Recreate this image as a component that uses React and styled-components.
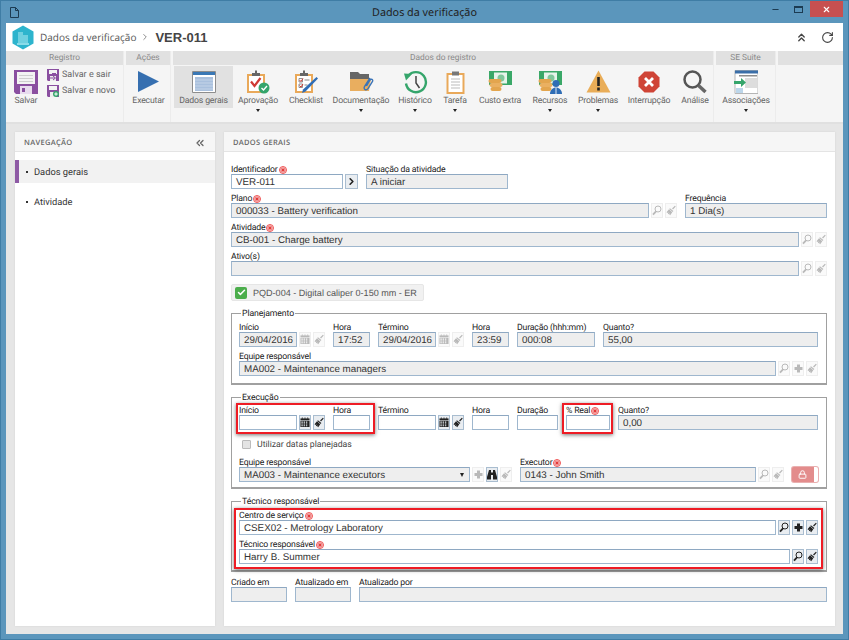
import styled, { createGlobalStyle } from "styled-components";
import { ChevronsUp, ChevronsLeft, RotateCw, ChevronRight, Check, Lock, Minus, X } from "lucide-react";

const GlobalStyle = createGlobalStyle`
  html, body { margin: 0; padding: 0; background: #5b96bc; overflow: hidden; }
  * { box-sizing: border-box; }
  body {
    font-family: Roboto, "Liberation Sans", sans-serif;
    color: #333;
    text-rendering: geometricPrecision;
  }
`;

const Page = styled.div`
  width: 849px;
  height: 640px;
  display: flex;
  flex-direction: column;
  background: #5b96bc;
  border: 1px solid #3f7da5;
`;
const TitleBar = styled.div`
  height: 22px;
  flex: none;
  position: relative;
  display: flex;
  align-items: center;
  justify-content: center;
  font-family: "Noto Sans", sans-serif;
  font-size: 10.8px;
  color: #222;
`;
const DocIcon = styled.svg`
  position: absolute;
  left: 9px;
  top: 6px;
`;
const WinControls = styled.div`
  position: absolute;
  right: 5px;
  top: 0;
  display: flex;
  align-items: flex-start;
`;
const WinBtn = styled.div`
  width: ${(p) => p.$w}px;
  height: 16px;
  display: flex;
  align-items: center;
  justify-content: center;
  background: ${(p) => (p.$close ? "#c75050" : "transparent")};
  color: ${(p) => (p.$close ? "#fff" : "#1c3b52")};
`;
const MaxBox = styled.div`
  width: 9px;
  height: 7px;
  border: 1px solid #1c3b52;
  border-top-width: 2px;
`;
const Frame = styled.div`
  flex: 1;
  margin: 0 5px 5px;
  display: flex;
  flex-direction: column;
  background: #e6e6e6;
  min-height: 0;
`;
const Header = styled.div`
  height: 28px;
  flex: none;
  background: #fff;
  display: flex;
  align-items: center;
  padding: 0 9px 0 6px;
`;
const Crumb = styled.span`
  font-family: "Open Sans", sans-serif;
  font-size: 10px;
  color: #555;
  margin-left: 6px;
`;
const CrumbSep = styled.span`
  display: flex;
  color: #777;
  margin: 0 5px 0 4px;
`;
const CrumbTitle = styled.span`
  font-family: "Liberation Sans", sans-serif;
  font-size: 13px;
  font-weight: 700;
  color: #444;
`;
const HeaderTools = styled.div`
  margin-left: auto;
  display: flex;
  gap: 13px;
  align-items: center;
  color: #444;
`;
const Ribbon = styled.div`
  height: 73px;
  flex: none;
  display: flex;
  background: #f5f5f5;
  border-bottom: 2px solid #e0e0e0;
`;
const Group = styled.div`
  width: ${(p) => p.$w}px;
  flex: ${(p) => (p.$w ? "none" : "1")};
  display: flex;
  flex-direction: column;
  margin-right: ${(p) => (p.$last ? 0 : 2)}px;
  border-right: ${(p) => (p.$last ? "none" : "1px solid #ececec")};
`;
const GroupTitle = styled.div`
  height: 14px;
  background: #e1e1e1;
  font-size: 8.4px;
  line-height: 15px;
  text-align: center;
  color: #8a8a8a;
  flex: none;
`;
const GroupBody = styled.div`
  display: flex;
  flex: 1;
  padding: 1px 0 0 1px;
`;
const Tool = styled.div`
  width: ${(p) => p.$w}px;
  height: ${(p) => (p.$active ? "42px" : "auto")};
  flex: none;
  display: flex;
  flex-direction: column;
  align-items: center;
  background: ${(p) => (p.$active ? "#e1e1e1" : "transparent")};
  padding-top: 3px;
`;
const ToolIcon = styled.div`
  height: 25px;
  width: 100%;
  display: flex;
  align-items: center;
  justify-content: center;
`;
const ToolLabel = styled.div`
  font-size: 8.7px;
  letter-spacing: -0.17px;
  line-height: 12px;
  margin-top: 1px;
  color: #666;
  white-space: nowrap;
`;
const Caret = styled.div`
  width: 0;
  height: 0;
  margin-top: 2px;
  border-left: 2.5px solid transparent;
  border-right: 2.5px solid transparent;
  border-top: 3px solid #222;
`;
const SaveStack = styled.div`
  display: flex;
  flex-direction: column;
  gap: 3px;
  padding: 2px 0 0 2px;
`;
const SaveLine = styled.div`
  display: flex;
  align-items: center;
  gap: 3px;
  font-size: 9px;
  color: #666;
  height: 13px;
`;
const Workspace = styled.div`
  flex: 1;
  display: flex;
  gap: 9px;
  padding: 8px 8px 8px 9px;
  min-height: 0;
`;
const Panel = styled.div`
  width: ${(p) => p.$w}px;
  flex: none;
  background: #fff;
  display: flex;
  flex-direction: column;
  box-shadow: 0 0 2px rgba(0, 0, 0, 0.08);
`;
const PanelHead = styled.div`
  height: 20px;
  flex: none;
  background: #f6f6f6;
  border-bottom: 1px solid #e4e4e4;
  display: flex;
  align-items: center;
  justify-content: space-between;
  padding: 2px 9px 0;
  font-family: "Open Sans", sans-serif;
  font-size: 7.5px;
  font-weight: 600;
  letter-spacing: 0.3px;
  color: #666;
`;
const NavList = styled.div`
  padding-top: 8px;
  display: flex;
  flex-direction: column;
  gap: 7px;
`;
const NavItem = styled.div`
  height: 23px;
  display: flex;
  align-items: center;
  gap: 6px;
  padding-left: ${(p) => (p.$active ? "7px" : "11px")};
  padding-top: 1px;
  font-size: 9.3px;
  color: #333;
  background: ${(p) => (p.$active ? "#f2f2f2" : "transparent")};
  border-left: ${(p) => (p.$active ? "4px solid #8e5aa5" : "none")};
`;
const Dot = styled.span`
  width: 2px;
  height: 2px;
  background: #333;
`;
const Form = styled.div`
  padding: 10px 8px 0 7px;
  display: flex;
  flex-direction: column;
`;
const Row = styled.div`
  display: flex;
  gap: 8px;
  margin-bottom: ${(p) => p.$mb ?? 2}px;
  align-items: flex-end;
`;
const FieldBox = styled.div`
  display: flex;
  flex-direction: column;
  width: ${(p) => (p.$w ? `${p.$w}px` : "auto")};
  flex: ${(p) => (p.$w ? "none" : "1")};
  min-width: 0;
`;
const LabelLine = styled.div`
  height: 12px;
  padding-top: 3px;
  display: flex;
  align-items: center;
  gap: 1px;
  font-size: 8.7px;
  letter-spacing: -0.17px;
  color: #222;
  white-space: nowrap;
`;
const InputRow = styled.div`
  display: flex;
  gap: 2px;
  height: 15px;
`;
const Input = styled.div`
  flex: 1;
  min-width: 0;
  height: 15px;
  border: 1px solid #9fb7ce;
  border-top-color: #8ea8c2;
  background: ${(p) => (p.$off ? "#eeeeee" : "#fff")};
  font-family: "Liberation Sans", sans-serif;
  font-size: 9.8px;
  line-height: 15px;
  padding-left: 4px;
  color: #333;
  white-space: nowrap;
  overflow: hidden;
  display: flex;
  justify-content: space-between;
`;
const IconButton = styled.div`
  width: ${(p) => p.$w ?? 12}px;
  height: 15px;
  flex: none;
  display: flex;
  align-items: center;
  justify-content: center;
  background: ${(p) => (p.$off ? "#fafafa" : "#e9edf1")};
  border: 1px solid ${(p) => (p.$off ? "#eeeeee" : "#a9bdd0")};
  color: ${(p) => (p.$off ? "#b9b9b9" : "#222")};
`;
const Chip = styled.div`
  width: 193px;
  height: 17px;
  margin: 8px 0 6px;
  background: #f1f1f1;
  border: 1px solid #e6e6e6;
  border-radius: 2px;
  display: flex;
  align-items: center;
  gap: 6px;
  padding-left: 3px;
  font-family: "Liberation Sans", sans-serif;
  font-size: 9.05px;
  white-space: nowrap;
  color: #555;
`;
const CheckTile = styled.div`
  width: 12px;
  height: 12px;
  flex: none;
  border-radius: 2px;
  background: #4cae4c;
  color: #fff;
  display: flex;
  align-items: center;
  justify-content: center;
`;
const Fieldset = styled.fieldset`
  margin: 0 0 ${(p) => p.$mb ?? 6}px;
  padding: ${(p) => p.$pt ?? 1}px 8px ${(p) => p.$pb ?? 7}px 7px;
  border: 1px solid #a0a0a0;
  border-bottom-width: 2px;
  min-width: 0;
`;
const Legend = styled.legend`
  margin-left: 2px;
  padding: 0 1px;
  height: 12px;
  line-height: 14px;
  font-size: 8.7px;
  letter-spacing: -0.1px;
  color: #222;
`;
const Highlight = styled.div`
  position: relative;
  display: flex;
  flex-direction: ${(p) => (p.$column ? "column" : "row")};
  gap: ${(p) => (p.$column ? 2 : 8)}px;
  flex: ${(p) => (p.$column ? "1" : "none")};
  &::after {
    content: "";
    position: absolute;
    top: ${(p) => p.$t ?? 0}px;
    right: ${(p) => p.$r}px;
    bottom: ${(p) => p.$b ?? -4}px;
    left: ${(p) => p.$l}px;
    border: 2px solid #ee1c25;
    box-shadow: 0 1px 4px rgba(0, 0, 0, 0.55);
    pointer-events: none;
  }
`;
const CheckLine = styled.div`
  display: flex;
  align-items: center;
  gap: 6px;
  height: 13px;
  margin: 8px 0 4px 3px;
  font-size: 8.7px;
  color: #444;
`;
const FakeCheck = styled.div`
  width: 9px;
  height: 9px;
  background: #e4e4e4;
  border: 1px solid #bbb;
  border-radius: 1px;
`;
const SelectCaret = styled.div`
  width: 0;
  height: 0;
  align-self: center;
  margin-right: 5px;
  border-left: 2.5px solid transparent;
  border-right: 2.5px solid transparent;
  border-top: 4px solid #222;
`;
const LockButton = styled.div`
  width: 26px;
  height: 15px;
  flex: none;
  background: #e38c8c;
  border-radius: 2px;
  color: #fff;
  display: flex;
  align-items: center;
  padding-left: 6px;
  border-right: 4px solid #fff;
  box-shadow: 0 0 0 1px #e9b0b0;
`;

const Required = () => (
  <svg width="8" height="8" viewBox="0 0 8 8">
    <circle cx="4" cy="4" r="3.5" fill="#fbd4d4" stroke="#ec4545" strokeWidth="0.9" />
    <path d="M4 1.500v5M1.500 4h5M2.400 2.400l3.200 3.200M5.600 2.400L2.400 5.600" stroke="#e12f2f" strokeWidth="0.8" />
  </svg>
);
const SearchGlyph = () => (
  <svg width="10" height="11" viewBox="0 0 10 11" fill="none" stroke="currentColor">
    <circle cx="6" cy="4" r="3" strokeWidth="1" />
    <path d="M4 6.400L1 9.600" strokeWidth="1.800" />
  </svg>
);
const BrushGlyph = () => (
  <svg width="11" height="11" viewBox="0 0 11 11" fill="currentColor">
    <path d="M9.800 0.300l0.900 0.900-3 3.200-1-1z" />
    <path d="M4.300 2.900l3.800 3.200-0.800 1L3.600 3.800z" />
    <path d="M3.300 4.200l3.600 3.100-2.300 3.300-1-0.700 0.600-1.300-1.300 1-0.900-0.800 1-1.300-1.600 0.700-0.800-0.900z" />
  </svg>
);
const PlusGlyph = () => (
  <svg width="9" height="9" viewBox="0 0 9 9" fill="currentColor">
    <path d="M3 0.500h3V3h2.500v3H6v2.500H3V6H0.500V3H3z" />
  </svg>
);
const CalendarGlyph = () => (
  <svg width="11" height="11" viewBox="0 0 11 11" fill="currentColor">
    <path d="M2 0h1v1.500H2zM5 0h1v1.500H5zM8 0h1v1.500H8z" />
    <path d="M0.500 1h10v2h-10z" />
    <path d="M0.500 3.500h10V10.500h-10zM1.500 4.500v1.200h1.600V4.500zM4 4.500v1.200h1.500V4.500zM6.500 4.500v1.200H8V4.500zM1.500 6.600v1.200h1.600V6.600zM4 6.600v1.200h1.500V6.600zM6.500 6.600v1.200H8V6.600zM1.500 8.600v1h1.600v-1zM4 8.600v1h1.500v-1zM6.500 8.600v1H8v-1z" fillRule="evenodd" />
  </svg>
);
const BinocularGlyph = () => (
  <svg width="10" height="11" viewBox="0 0 10 11" fill="currentColor">
    <path d="M2 1h2v2.500h2V1h2l2 7v2.500H6V6H4v4.500H0V8z" />
  </svg>
);
const Logo = () => (
  <svg width="22" height="25" viewBox="0 0 22 25">
    <path d="M11 0.500L21.500 6.500V18.500L11 24.500L0.500 18.500V6.500z" fill="#2db4cd" />
    <path d="M6 7h5v11H6zM11 10h5v8h-5z" fill="#6fd0e0" />
    <path d="M5 18h12v2H5z" fill="#8adbe8" />
  </svg>
);

const SaveBig = () => (
  <svg width="24" height="24" viewBox="0 0 24 24">
    <path d="M0 0h24v24H2l-2-2z" fill="#8a4fa0" />
    <path d="M3 2h18v12H3z" fill="#f3f3f3" />
    <path d="M5 5h14v1H5zM5 8h14v1H5zM5 11h14v1H5z" fill="#cfcfcf" />
    <path d="M6 16h12v8H6z" fill="#e8dcee" />
    <path d="M8 18h3v4H8z" fill="#8a4fa0" />
  </svg>
);
const SaveSmall = ({ badge }) => (
  <svg width="12" height="12" viewBox="0 0 12 12">
    <path d="M0 0h12v12H1l-1-1z" fill="#8a4fa0" />
    <path d="M2 1h8v4H2z" fill="#f3f3f3" />
    <path d="M3 7h6v5H3z" fill="#eee" />
    {badge === "new" ? (
      <>
        <circle cx="9" cy="9" r="3" fill="#35a56b" />
        <path d="M9 7.300v3.400M7.300 9h3.400" stroke="#fff" />
      </>
    ) : (
      <path d="M3 9h5M6 7l2.500 2L6 11M5 4.500h4" stroke="#8a4fa0" fill="none" />
    )}
  </svg>
);
const PlayIcon = () => (
  <svg width="21" height="21" viewBox="0 0 21 21">
    <path d="M0 0L21 10.500L0 21z" fill="#366fb0" />
  </svg>
);
const DataIcon = () => (
  <svg width="24" height="22" viewBox="0 0 24 22">
    <path d="M0.500 0.500h23v21h-23z" fill="#fff" stroke="#8d8d8d" />
    <path d="M1 1h22v3H1z" fill="#3a78b5" />
    <path d="M3 6h18v14H3z" fill="#a9c0dd" />
    <path d="M3 9h18M3 12h18M3 15h18M3 18h18" stroke="#c4d4e8" />
  </svg>
);
const Clipboard = ({ children }) => (
  <svg width="24" height="24" viewBox="0 0 24 24">
    <path d="M1 4h18v19H1z" fill="#e9a95a" />
    <path d="M3 6h14v15H3z" fill="#fff" />
    <path d="M6 3h8v3H6z" fill="#666" />
    <path d="M9 0.500h2v3H9z" fill="#666" />
    {children}
  </svg>
);
const ApprovalIcon = () => (
  <Clipboard>
    <path d="M5 11.500l3.500 4.500 6-8" stroke="#cf3a34" strokeWidth="2.200" fill="none" />
    <circle cx="18" cy="18" r="5.500" fill="#35a56b" />
    <path d="M15.500 18l2 2 3.500-4" stroke="#fff" strokeWidth="1.400" fill="none" />
  </Clipboard>
);
const ChecklistIcon = () => (
  <Clipboard>
    <path d="M5 8.500h3.500V12H5zM5 14h3.500v3.500H5z" fill="none" stroke="#777" strokeWidth="0.8" />
    <path d="M5.500 10l1.500 1.500 2-3M5.500 15.500l1.500 1.500 2-3" stroke="#cf3a34" fill="none" />
    <path d="M10.500 10h5M10.500 15h3" stroke="#888" />
    <path d="M24 8.500L11.500 21.500l-3.500 1.500 1-3.500L22.500 7z" fill="#2f6db5" />
  </Clipboard>
);
const FolderIcon = () => (
  <svg width="25" height="24" viewBox="0 0 25 24">
    <path d="M1 2h8l2 2h9v6H1z" fill="#666" />
    <path d="M1 21V9h21l-2 12z" fill="#e9ae5f" />
    <path d="M21 8l-5.500 8.500c-1.500 3 2 4.500 3.500 2l4.500-7c1-2-1.500-3-2.500-1.500l-3.500 6" fill="none" stroke="#3b74b8" strokeWidth="1.400" />
  </svg>
);
const HistoryIcon = () => (
  <svg width="25" height="24" viewBox="0 0 25 24" fill="none">
    <path d="M5 6A10 10 0 1 1 3 13.500" stroke="#35a56b" strokeWidth="2.400" />
    <path d="M1 3.500l8 0.500-6 6.500z" fill="#35a56b" />
    <path d="M13 6v7l3.500 5" stroke="#444" strokeWidth="1.500" />
  </svg>
);
const TaskIcon = () => (
  <svg width="19" height="24" viewBox="0 0 19 24">
    <path d="M0.500 3h18v21h-18z" fill="#e9a95a" />
    <path d="M2.500 5h14v17h-14z" fill="#fff" />
    <path d="M6 1.500h7v4H6z" fill="#777" />
    <path d="M5 9h9M5 12h9M5 15h9M5 18h9" stroke="#bbb" />
  </svg>
);
const Bill = () => (
  <>
    <path d="M1 1h23v14H1z" fill="#3aa868" />
    <path d="M6 2.500h13v11H6z" fill="#e6f4ea" />
    <circle cx="13" cy="8" r="3.500" fill="#7fc79c" />
  </>
);
const Coins = () => (
  <>
    <rect x="0.500" y="9" width="13" height="4" rx="2" fill="#e3a54e" />
    <rect x="1.500" y="13" width="13" height="4" rx="2" fill="#eab061" />
    <rect x="2.500" y="17" width="11" height="4" rx="2" fill="#e3a54e" />
  </>
);
const MoneyIcon = () => (
  <svg width="25" height="23" viewBox="0 0 25 23">
    <Bill />
    <Coins />
  </svg>
);
const ResourcesIcon = () => (
  <svg width="25" height="24" viewBox="0 0 25 24">
    <Bill />
    <Coins />
    <circle cx="18" cy="13.500" r="3.500" fill="#2f6db5" />
    <path d="M12 24c0-4 3-6.500 6-6.500s6 2.500 6 6.500z" fill="#2f6db5" />
    <path d="M18 17.500v6.500" stroke="#dfe9f3" />
  </svg>
);
const WarnIcon = () => (
  <svg width="25" height="23" viewBox="0 0 25 23">
    <path d="M12.500 0.500L24.500 22.500H0.500z" fill="#e9ad58" />
    <path d="M11.200 7h2.600v9h-2.600zM11.200 17.500h2.600v3h-2.600z" fill="#222" />
  </svg>
);
const StopIcon = () => (
  <svg width="22" height="22" viewBox="0 0 22 22">
    <path d="M6.500 0.500h9l6 6v9l-6 6h-9l-6-6v-9z" fill="#cf4436" />
    <path d="M7 7l8 8M15 7l-8 8" stroke="#fff" strokeWidth="2.800" />
  </svg>
);
const LensIcon = () => (
  <svg width="24" height="24" viewBox="0 0 24 24" fill="none">
    <circle cx="9.500" cy="9.500" r="8" stroke="#555" strokeWidth="2.500" />
    <path d="M15.500 15.500L22.500 22" stroke="#666" strokeWidth="3.500" />
  </svg>
);
const AssocIcon = () => (
  <svg width="24" height="24" viewBox="0 0 24 24">
    <path d="M1 0.500h23v23H1z" fill="#fff" stroke="#b5b5b5" />
    <path d="M1 0.500h23v3H1z" fill="#3a6ea8" />
    <path d="M5 5h18v1.500H5z" fill="#8d8d8d" />
    <path d="M11 8h12v10H11z" fill="#dddddd" />
    <path d="M2 18h7v5H2z" fill="#bcd6ea" />
    <path d="M0 11h7V8l5 4.500L7 17v-3H0z" fill="#35a56b" />
  </svg>
);

const dataTools = [
  { label: "Dados gerais", w: 59, icon: <DataIcon />, active: true },
  { label: "Aprovação", w: 50, icon: <ApprovalIcon />, caret: true },
  { label: "Checklist", w: 46, icon: <ChecklistIcon /> },
  { label: "Documentação", w: 64, icon: <FolderIcon />, caret: true },
  { label: "Histórico", w: 44, icon: <HistoryIcon />, caret: true },
  { label: "Tarefa", w: 36, icon: <TaskIcon />, caret: true },
  { label: "Custo extra", w: 54, icon: <MoneyIcon /> },
  { label: "Recursos", w: 46, icon: <ResourcesIcon />, caret: true },
  { label: "Problemas", w: 50, icon: <WarnIcon />, caret: true },
  { label: "Interrupção", w: 52, icon: <StopIcon /> },
  { label: "Análise", w: 40, icon: <LensIcon /> },
];

const glyphs = {
  search: <SearchGlyph />,
  brush: <BrushGlyph />,
  plus: <PlusGlyph />,
  calendar: <CalendarGlyph />,
  binoculars: <BinocularGlyph />,
};

function Field({ label, required, value, off, w, tools = [], toolsOff, select, activeTool }) {
  return (
    <FieldBox $w={w}>
      <LabelLine>
        {label}
        {required && <Required />}
      </LabelLine>
      <InputRow>
        <Input $off={off}>
          {value}
          {select && <SelectCaret />}
        </Input>
        {tools.map((t) => (
          <IconButton key={t} $off={toolsOff && t !== activeTool}>
            {glyphs[t]}
          </IconButton>
        ))}
      </InputRow>
    </FieldBox>
  );
}

export default function App() {
  return (
    <Page>
      <GlobalStyle />
      <TitleBar>
        <DocIcon width="9" height="11" viewBox="0 0 9 11" fill="none" stroke="#1c3b52">
          <path d="M0.500 0.500h5l3 3v7h-8zM5.500 0.500v3h3" />
        </DocIcon>
        Dados da verificação
        <WinControls>
          <WinBtn $w={21}>
            <Minus size={9} strokeWidth={3} />
          </WinBtn>
          <WinBtn $w={24}>
            <MaxBox />
          </WinBtn>
          <WinBtn $w={33} $close>
            <X size={9} strokeWidth={3} />
          </WinBtn>
        </WinControls>
      </TitleBar>
      <Frame>
        <Header>
          <Logo />
          <Crumb>Dados da verificação</Crumb>
          <CrumbSep>
            <ChevronRight size={10} />
          </CrumbSep>
          <CrumbTitle>VER-011</CrumbTitle>
          <HeaderTools>
            <ChevronsUp size={13} strokeWidth={2.5} />
            <RotateCw size={13} strokeWidth={2} />
          </HeaderTools>
        </Header>
        <Ribbon>
          <Group $w={118}>
            <GroupTitle>Registro</GroupTitle>
            <GroupBody>
              <Tool $w={38}>
                <ToolIcon>
                  <SaveBig />
                </ToolIcon>
                <ToolLabel>Salvar</ToolLabel>
              </Tool>
              <SaveStack>
                <SaveLine>
                  <SaveSmall />
                  Salvar e sair
                </SaveLine>
                <SaveLine>
                  <SaveSmall badge="new" />
                  Salvar e novo
                </SaveLine>
              </SaveStack>
            </GroupBody>
          </Group>
          <Group $w={45}>
            <GroupTitle>Ações</GroupTitle>
            <GroupBody>
              <Tool $w={43}>
                <ToolIcon>
                  <PlayIcon />
                </ToolIcon>
                <ToolLabel>Executar</ToolLabel>
              </Tool>
            </GroupBody>
          </Group>
          <Group $w={541}>
            <GroupTitle>Dados do registro</GroupTitle>
            <GroupBody>
              {dataTools.map((t) => (
                <Tool key={t.label} $w={t.w} $active={t.active}>
                  <ToolIcon>{t.icon}</ToolIcon>
                  <ToolLabel>{t.label}</ToolLabel>
                  {t.caret && <Caret />}
                </Tool>
              ))}
            </GroupBody>
          </Group>
          <Group $w={60}>
            <GroupTitle>SE Suite</GroupTitle>
            <GroupBody>
              <Tool $w={58}>
                <ToolIcon>
                  <AssocIcon />
                </ToolIcon>
                <ToolLabel>Associações</ToolLabel>
                <Caret />
              </Tool>
            </GroupBody>
          </Group>
          <Group $last>
            <GroupTitle />
          </Group>
        </Ribbon>
        <Workspace>
          <Panel $w={200}>
            <PanelHead>
              NAVEGAÇÃO
              <ChevronsLeft size={12} strokeWidth={2.5} />
            </PanelHead>
            <NavList>
              <NavItem $active>
                <Dot />
                Dados gerais
              </NavItem>
              <NavItem>
                <Dot />
                Atividade
              </NavItem>
            </NavList>
          </Panel>
          <Panel $w={611}>
            <PanelHead>DADOS GERAIS</PanelHead>
            <Form>
              <Row>
                <FieldBox $w={127}>
                  <LabelLine>
                    Identificador
                    <Required />
                  </LabelLine>
                  <InputRow>
                    <Input>VER-011</Input>
                    <IconButton $w={13}>
                      <ChevronRight size={11} strokeWidth={3.5} />
                    </IconButton>
                  </InputRow>
                </FieldBox>
                <Field w={142} label="Situação da atividade" value="A iniciar" off />
              </Row>
              <Row>
                <Field label="Plano" required value="000033 - Battery verification" off tools={["search", "brush"]} toolsOff />
                <Field w={142} label="Frequência" value="1 Dia(s)" off />
              </Row>
              <Row>
                <Field label="Atividade" required value="CB-001 - Charge battery" off tools={["search", "brush"]} toolsOff />
              </Row>
              <Row $mb={0}>
                <Field label="Ativo(s)" off tools={["search", "brush"]} toolsOff />
              </Row>
              <Chip>
                <CheckTile>
                  <Check size={9} strokeWidth={4} />
                </CheckTile>
                PQD-004 - Digital caliper 0-150 mm - ER
              </Chip>
              <Fieldset>
                <Legend>Planejamento</Legend>
                <Row>
                  <Field w={86} label="Início" value="29/04/2016" off tools={["calendar", "brush"]} toolsOff />
                  <Field w={37} label="Hora" value="17:52" off />
                  <Field w={86} label="Término" value="29/04/2016" off tools={["calendar", "brush"]} toolsOff />
                  <Field w={37} label="Hora" value="23:59" off />
                  <Field w={78} label="Duração (hhh:mm)" value="000:08" off />
                  <Field label="Quanto?" value="55,00" off />
                </Row>
                <Row $mb={0}>
                  <Field label="Equipe responsável" value="MA002 - Maintenance managers" off tools={["search", "plus", "brush"]} toolsOff />
                </Row>
              </Fieldset>
              <Fieldset $pt={0} $pb={5}>
                <Legend>Execução</Legend>
                <Row $mb={0}>
                  <Highlight $l={-3} $r={-5}>
                    <Field w={86} label="Início" tools={["calendar", "brush"]} />
                    <Field w={37} label="Hora" />
                  </Highlight>
                  <Field w={86} label="Término" tools={["calendar", "brush"]} />
                  <Field w={37} label="Hora" />
                  <Field w={41} label="Duração" />
                  <Highlight $l={-4} $r={-3}>
                    <Field w={44} label="% Real" required />
                  </Highlight>
                  <Field label="Quanto?" value="0,00" off />
                </Row>
                <CheckLine>
                  <FakeCheck />
                  Utilizar datas planejadas
                </CheckLine>
                <Row $mb={0}>
                  <Field w={273} label="Equipe responsável" value="MA003 - Maintenance executors" off select tools={["plus", "binoculars", "brush"]} toolsOff activeTool="binoculars" />
                  <Field label="Executor" required value="0143 - John Smith" off tools={["search", "brush"]} toolsOff />
                  <LockButton>
                    <Lock size={9} strokeWidth={2.5} />
                  </LockButton>
                </Row>
              </Fieldset>
              <Fieldset $mb={3} $pb={6}>
                <Legend>Técnico responsável</Legend>
                <Highlight $column $t={0} $l={-5} $r={-5} $b={-5}>
                  <Field label="Centro de serviço" required value="CSEX02 - Metrology Laboratory" tools={["search", "plus", "brush"]} />
                  <Field label="Técnico responsável" required value="Harry B. Summer" tools={["search", "brush"]} />
                </Highlight>
              </Fieldset>
              <Row>
                <Field w={56} label="Criado em" off />
                <Field w={56} label="Atualizado em" off />
                <Field label="Atualizado por" off />
              </Row>
            </Form>
          </Panel>
        </Workspace>
      </Frame>
    </Page>
  );
}
